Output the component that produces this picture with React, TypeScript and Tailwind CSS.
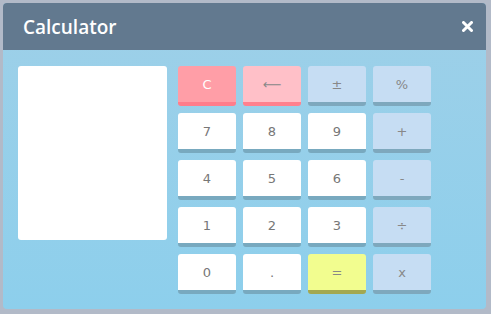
import React from "react";

type B = { label: string; face: string };

const btns: B[] = [
  { label: "C", face: "bg-[#ff9ea7] border-[#ff7d8b] text-white" },
  { label: "⟵", face: "bg-[#ffc0c8] border-[#ff808d] text-[#888]" },
  { label: "±", face: "bg-[#c6ddf3] border-[#7ea8bd] text-[#888]" },
  { label: "%", face: "bg-[#c6ddf3] border-[#7ea8bd] text-[#888]" },
  { label: "7", face: "bg-white border-[#78a9bf] text-[#777]" },
  { label: "8", face: "bg-white border-[#78a9bf] text-[#777]" },
  { label: "9", face: "bg-white border-[#78a9bf] text-[#777]" },
  { label: "+", face: "bg-[#c6ddf3] border-[#7ea8bd] text-[#888]" },
  { label: "4", face: "bg-white border-[#78a9bf] text-[#777]" },
  { label: "5", face: "bg-white border-[#78a9bf] text-[#777]" },
  { label: "6", face: "bg-white border-[#78a9bf] text-[#777]" },
  { label: "-", face: "bg-[#c6ddf3] border-[#7ea8bd] text-[#888]" },
  { label: "1", face: "bg-white border-[#78a9bf] text-[#777]" },
  { label: "2", face: "bg-white border-[#78a9bf] text-[#777]" },
  { label: "3", face: "bg-white border-[#78a9bf] text-[#777]" },
  { label: "÷", face: "bg-[#c6ddf3] border-[#7ea8bd] text-[#888]" },
  { label: "0", face: "bg-white border-[#78a9bf] text-[#777]" },
  { label: ".", face: "bg-white border-[#78a9bf] text-[#777]" },
  { label: "=", face: "bg-[#f2fd8f] border-[#a3a851] text-[#888]" },
  { label: "x", face: "bg-[#c6ddf3] border-[#7ea8bd] text-[#888]" },
];

export default function App() {
  return (
    <div className="w-[491px] h-[314px] bg-[#b2bac8] pt-[3px] pl-[3px]">
      <div className="w-[483px] h-[306px] rounded-[4px] overflow-hidden flex flex-col bg-gradient-to-b from-[#9ed0e8] to-[#8dcfec]">
        <div className="h-[47px] shrink-0 bg-[#62798f] flex items-center justify-between pl-[20px] pr-[13px] pt-[2px]">
          <span
            className="text-white text-[19px] font-semibold leading-none"
            style={{ fontFamily: '"Open Sans", sans-serif' }}
          >
            Calculator
          </span>
          <svg width="11" height="11" viewBox="0 0 11 11" className="mb-[2px]">
            <path d="M1.5 1.5 L9.5 9.5 M9.5 1.5 L1.5 9.5" stroke="white" strokeWidth="3" strokeLinecap="round" />
          </svg>
        </div>
        <div className="flex pl-[15px] pt-[16px] gap-[11px]">
          <div className="w-[149px] h-[174px] bg-white rounded-[3px]" />
          <div
            className="grid grid-cols-[repeat(4,58px)] auto-rows-[40px] gap-[7px]"
            style={{ fontFamily: '"DejaVu Sans", sans-serif' }}
          >
            {btns.map((b, i) => (
              <div
                key={i}
                className={`rounded-[3px] border-b-4 flex items-center justify-center text-[13px] leading-none ${b.face}`}
              >
                {b.label}
              </div>
            ))}
          </div>
        </div>
      </div>
    </div>
  );
}
